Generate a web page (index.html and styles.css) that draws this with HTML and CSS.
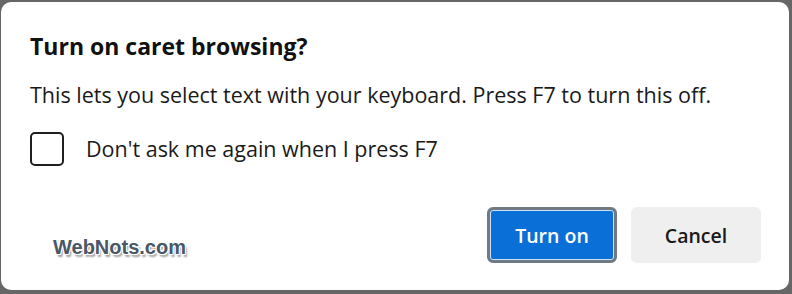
FILE: index.html
```html
<!DOCTYPE html>
<html>
<head>
<meta charset="utf-8">
<link rel="stylesheet" href="styles.css">
</head>
<body>
<div class="frame">
  <div class="dialog">
    <h1 class="title">Turn on caret browsing?</h1>
    <p class="desc">This lets you select text with your keyboard. Press F7 to turn this off.</p>
    <label class="check-row">
      <span class="checkbox"></span>
      <span class="check-label">Don't ask me again when I press F7</span>
    </label>
    <div class="footer">
      <span class="watermark">WebNots.com</span>
      <div class="buttons">
        <button class="btn btn-primary">Turn on</button>
        <button class="btn btn-secondary">Cancel</button>
      </div>
    </div>
  </div>
</div>
</body>
</html>
```

FILE: styles.css
```css
html, body {
  margin: 0;
  padding: 0;
}
body {
  width: 792px;
  height: 294px;
  overflow: hidden;
  font-family: "Open Sans", "Noto Sans", sans-serif;
  color: #1a1a1a;
}
.frame {
  width: 792px;
  height: 294px;
  box-sizing: border-box;
  background: #666;
  padding: 2px 3px 4px 1px;
}
.dialog {
  box-sizing: border-box;
  height: 100%;
  background: #fff;
  border-radius: 10px;
  padding: 29px 28px 0 29px;
  display: flex;
  flex-direction: column;
}
.title {
  margin: 0;
  font-size: 23px;
  font-weight: 700;
  line-height: 30px;
  color: #111;
}
.desc {
  margin: 20px 0 0;
  font-size: 21.5px;
  line-height: 28px;
  color: #1a1a1a;
}
.check-row {
  margin-top: 23px;
  display: flex;
  align-items: center;
  gap: 22px;
}
.checkbox {
  width: 30px;
  height: 30px;
  border: 2px solid #1f1f1f;
  border-radius: 5px;
  box-sizing: content-box;
  flex: none;
}
.check-label {
  font-size: 21.5px;
  line-height: 28px;
  color: #1a1a1a;
}
.footer {
  margin-top: 41px;
  display: flex;
  align-items: center;
  justify-content: space-between;
}
.watermark {
  margin-left: 23px;
  margin-top: 24px;
  font-family: "Liberation Sans", Arial, sans-serif;
  font-weight: 700;
  font-size: 20px;
  color: #485866;
  text-shadow: -1px -1px 0 #fff, 1px -1px 0 #fff, -1px 1px 0 #fff, 1px 1px 0 #fff, 2px 3px 2px #9a9a9a;
}
.buttons {
  display: flex;
  gap: 14px;
}
.btn {
  font-family: inherit;
  font-size: 19.5px;
  font-weight: 600;
  height: 56px;
  border-radius: 6px;
  cursor: pointer;
}
.btn-primary {
  width: 130px;
  background: #0a6fd6;
  color: #fff;
  border: 3px solid #6f7a84;
  box-shadow: inset 0 0 0 1px #cfe3f7;
}
.btn-secondary {
  width: 130px;
  background: #efefef;
  color: #1a1a1a;
  border: none;
}
```
